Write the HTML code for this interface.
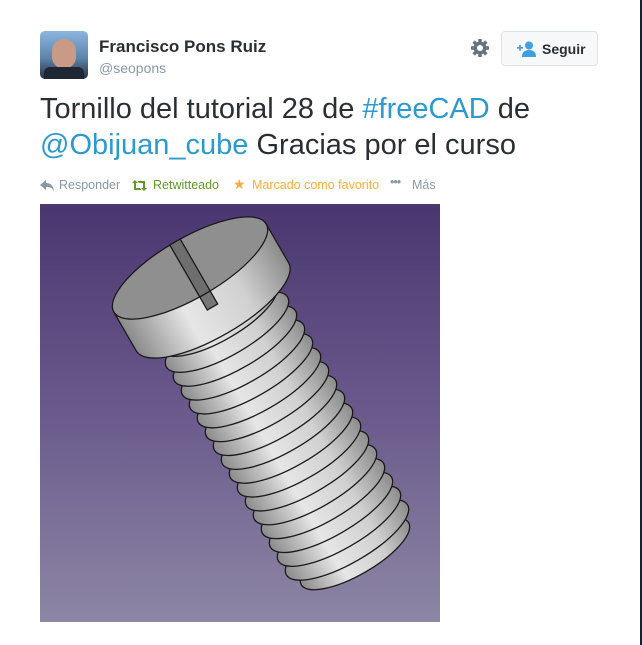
<!DOCTYPE html>
<html><head><meta charset="utf-8"><style>
body{margin:0;width:642px;height:645px;background:#fff;position:relative;overflow:hidden;font-family:"Liberation Sans",sans-serif}
.r{position:absolute;right:0;top:0;width:2px;height:645px;background:#0f2430}
.av{position:absolute;left:40px;top:31px;width:48px;height:48px;border-radius:5px;background:linear-gradient(#8ab6df,#5f86ad 55%,#27303e)}
.name{position:absolute;left:99px;top:37px;font-size:17px;font-weight:bold;color:#292f33}
.at{position:absolute;left:99px;top:60px;font-size:14px;color:#8899a6}
.btn{position:absolute;left:501px;top:31px;width:97px;height:35px;border:1px solid #dde3e8;border-radius:4px;background:#f6f8fa;box-sizing:border-box;font-size:14px;font-weight:bold;color:#292f33}
.txt{position:absolute;left:40px;top:91px;font-size:29px;line-height:36px;color:#292f33;width:590px}
.l{color:#2b9ad0}
.act{position:absolute;top:178px;font-size:12.5px;color:#8899a6}
</style></head><body>
<div class="r"></div>
<div class="av"><div style="position:absolute;left:12px;top:8px;width:24px;height:30px;border-radius:12px;background:#c99b86"></div><div style="position:absolute;left:4px;top:36px;width:40px;height:12px;background:#1f2734;border-radius:6px 6px 0 0"></div></div>
<div class="name">Francisco Pons Ruiz</div>
<div class="at">@seopons</div>
<svg style="position:absolute;left:470px;top:38px" width="20" height="20" viewBox="0 0 20 20"><g fill="#66757f"><circle cx="10" cy="10" r="6.5"/><g stroke="#66757f" stroke-width="3.5"><line x1="10" y1="1" x2="10" y2="19"/><line x1="1" y1="10" x2="19" y2="10"/><line x1="3.6" y1="3.6" x2="16.4" y2="16.4"/><line x1="16.4" y1="3.6" x2="3.6" y2="16.4"/></g></g><circle cx="10" cy="10" r="3" fill="#fff"/></svg>
<div class="btn"><svg style="position:absolute;left:15px;top:9px" width="20" height="16" viewBox="0 0 20 16"><g fill="#3ea0dc"><rect x="0" y="6" width="6" height="1.6"/><rect x="2.2" y="3.8" width="1.6" height="6"/><circle cx="12" cy="4.5" r="4"/><path d="M5 16 Q5 9 12 9 Q19 9 19 16Z"/></g></svg><span style="position:absolute;left:40px;top:9px">Seguir</span></div>
<div class="txt">Tornillo del tutorial 28 de <span class="l">#freeCAD</span> de <span class="l">@Obijuan_cube</span> Gracias por el curso</div>
<svg class="act" style="left:40px;top:180px" width="14" height="11" viewBox="0 0 14 11"><path d="M0 5 L6 0 V3 Q13 3 14 11 Q11 6 6 7 V10Z" fill="#8899a6"/></svg>
<div class="act" style="left:59px">Responder</div>
<svg class="act" style="left:132px;top:180px" width="15" height="11" viewBox="0 0 15 11"><g fill="#609928"><path d="M0 3 L3 0 L6 3 H4 V8 H8 L9.5 10 H2 V3Z"/><path d="M15 8 L12 11 L9 8 H11 V3 H7 L5.5 1 H13 V8Z"/></g></svg>
<div class="act" style="left:153px;color:#609928">Retwitteado</div>
<div class="act" style="left:233px;color:#ffac33;top:176px;font-size:14px">★</div>
<div class="act" style="left:252px;color:#ffac33">Marcado como favorito</div>
<div class="act" style="left:390px;letter-spacing:-1px;top:175px">•••</div>
<div class="act" style="left:412px">Más</div>
<svg style="position:absolute;left:40px;top:204px" width="400" height="418" viewBox="40 204 400 418">
<defs><linearGradient id="bg" x1="0" y1="0" x2="0" y2="1"><stop offset="0" stop-color="#4a3670"/><stop offset="0.5" stop-color="#6a5a8c"/><stop offset="1" stop-color="#8d86a4"/></linearGradient>
<linearGradient id="m" x1="0" y1="0" x2="1" y2="0"><stop offset="0" stop-color="#8a8a8a"/><stop offset="0.35" stop-color="#e6e6e6"/><stop offset="0.7" stop-color="#d0d0d0"/><stop offset="1" stop-color="#8c8c8c"/></linearGradient></defs>
<rect x="40" y="204" width="400" height="418" fill="url(#bg)"/>
<g transform="translate(190,268) rotate(-30)" stroke="#1a1a1a" stroke-width="1.3">
<rect x="-62" y="40" width="124" height="290" fill="url(#m)" stroke="none"/>
<g fill="url(#m)">
<ellipse cx="0" cy="330" rx="62" ry="21"/>
<ellipse cx="0" cy="314" rx="70" ry="23"/><ellipse cx="0" cy="298" rx="70" ry="23"/><ellipse cx="0" cy="282" rx="70" ry="23"/><ellipse cx="0" cy="266" rx="70" ry="23"/><ellipse cx="0" cy="250" rx="70" ry="23"/><ellipse cx="0" cy="234" rx="70" ry="23"/><ellipse cx="0" cy="218" rx="70" ry="23"/><ellipse cx="0" cy="202" rx="70" ry="23"/><ellipse cx="0" cy="186" rx="70" ry="23"/><ellipse cx="0" cy="170" rx="70" ry="23"/><ellipse cx="0" cy="154" rx="70" ry="23"/><ellipse cx="0" cy="138" rx="70" ry="23"/><ellipse cx="0" cy="122" rx="70" ry="23"/><ellipse cx="0" cy="106" rx="70" ry="23"/><ellipse cx="0" cy="90" rx="70" ry="23"/><ellipse cx="0" cy="74" rx="70" ry="23"/><ellipse cx="0" cy="58" rx="66" ry="22"/>
<path d="M-88 0 V45 A88 30 0 0 0 88 45 V0Z"/>
</g>
<ellipse cx="0" cy="0" rx="88" ry="30" fill="#8f8f8f"/>
<path d="M-6 -30 V30 L6 30 V-30Z" fill="#6e6e6e"/>
<path d="M-6 30 V45 H6 V30Z" fill="#777"/>
</g>
</svg>
</body></html>
